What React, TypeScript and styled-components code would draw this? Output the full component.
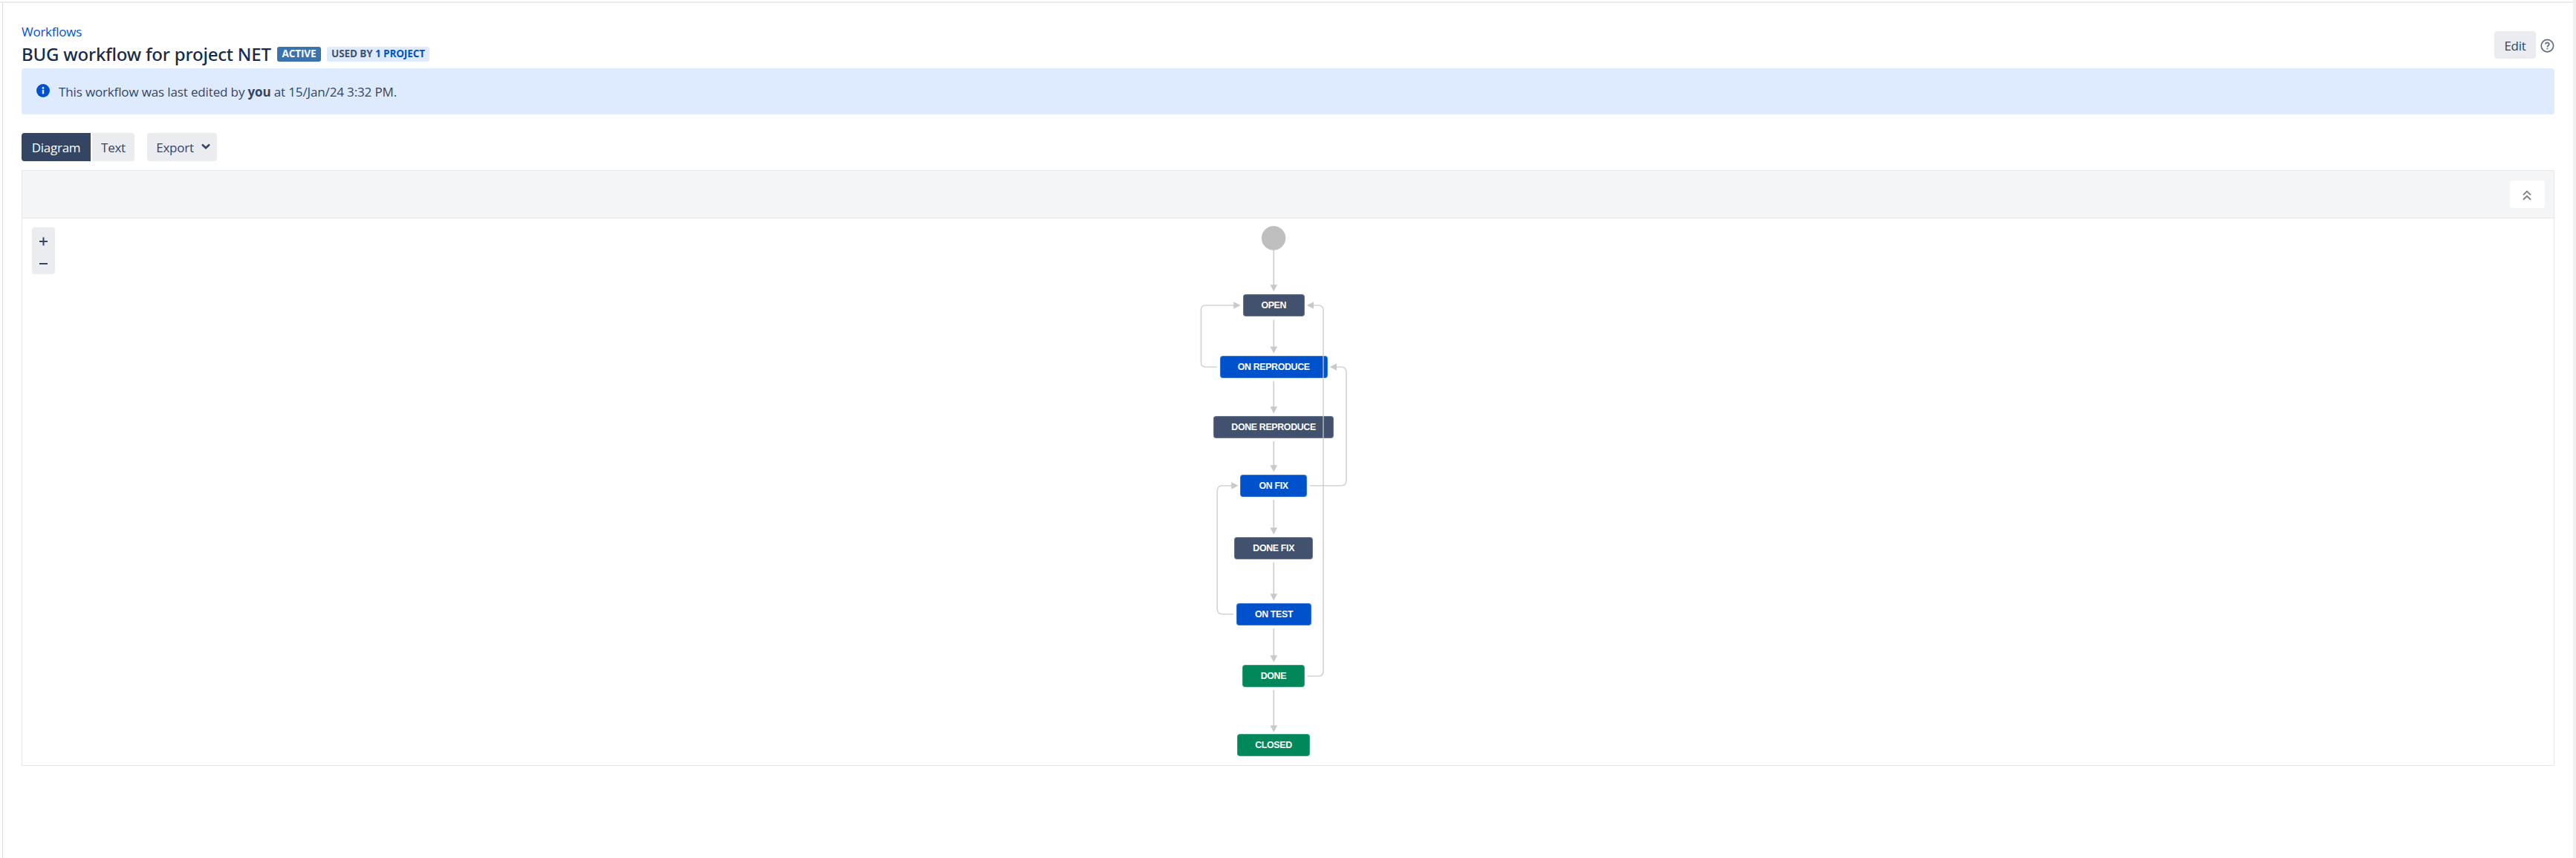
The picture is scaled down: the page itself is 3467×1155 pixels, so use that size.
import React from 'react';
import styled, { createGlobalStyle } from 'styled-components';

const sans = `"Open Sans", "Noto Sans", sans-serif`;

const GlobalStyle = createGlobalStyle`
  * { box-sizing: border-box; }
  body { margin: 0; background: #fff; overflow: hidden; }
`;

const Page = styled.div`
  display: flex;
  flex-direction: column;
  height: 1155px;
  padding-top: 2px;
  font: 400 17px/24px ${sans};
  letter-spacing: -0.14px;
  color: #344563;
`;
const TopRule = styled.div`
  height: 2px;
  width: 3463px;
  background: #ebecf0;
`;
const Body = styled.div`
  flex: 1;
  display: flex;
  margin-top: -2px;
`;
const Main = styled.main`
  flex: 1;
  min-width: 0;
  margin: 2px 0 0 3px;
  border-left: 1px solid #e0e0e0;
  padding: 26px 25px 0;
`;
const ScrollTrack = styled.div`
  width: 4px;
  margin-top: -2px;
  background: #f0f0f0;
`;
const Header = styled.header`
  display: flex;
  justify-content: space-between;
  height: 62px;
`;
const Titles = styled.div`
  display: flex;
  flex-direction: column;
`;
const Crumb = styled.a`
  display: block;
  height: 24px;
  line-height: 26px;
  letter-spacing: -0.25px;
  color: #0052cc;
`;
const TitleRow = styled.div`
  display: flex;
  align-items: center;
  height: 38px;
`;
const Title = styled.h1`
  margin: 0;
  width: 344px;
  white-space: nowrap;
  font: 500 24px/38px "Noto Sans", sans-serif;
  letter-spacing: -0.2px;
  color: #172b4d;
`;
const Badge = styled.span<{ $bg: string; $fg: string; $w: number }>`
  width: ${p => p.$w}px;
  height: 20px;
  margin-right: 8px;
  border-radius: 3px;
  background: ${p => p.$bg};
  color: ${p => p.$fg};
  text-align: center;
  white-space: pre;
  font: 700 13.5px/18px ${sans};
  letter-spacing: -0.1px;
`;
const BadgeLink = styled.a`
  color: #0052cc;
`;
const HeaderActions = styled.div`
  display: flex;
  align-items: center;
  gap: 6px;
  height: 37px;
  margin-top: 12px;
`;
const HelpIcon = styled.svg`
  margin-top: 2px;
`;
const Button = styled.button<{ $w: number; $active?: boolean; $radius?: string }>`
  display: flex;
  align-items: center;
  justify-content: center;
  gap: 9px;
  width: ${p => p.$w}px;
  height: 100%;
  padding: 2px 0 0;
  border: 0;
  border-radius: ${p => p.$radius ?? '4px'};
  background: ${p => (p.$active ? '#344563' : '#ebecf0')};
  color: ${p => (p.$active ? '#fff' : '#344563')};
  font: inherit;
  letter-spacing: -0.25px;
`;
const ExportButton = styled(Button)`
  padding-left: 4px;
`;
const Chevron = styled.svg`
  margin-bottom: 2px;
`;
const Banner = styled.section`
  display: flex;
  align-items: center;
  height: 62px;
  padding-left: 20px;
  border-radius: 4px;
  background: #deebff;
`;
const BannerIcon = styled.svg`
  margin: 0 12px 2px 0;
`;
const BannerText = styled.p`
  margin: 2px 0 0;
  white-space: pre;
`;
const Toolbar = styled.div`
  display: flex;
  height: 38px;
  margin: 25px 0 12px;
`;
const Group = styled.div`
  display: flex;
  gap: 2px;
  margin-right: 17px;
`;
const Frame = styled.section`
  height: 802px;
  border: 1px solid #e6e7e9;
`;
const FrameBar = styled.div`
  display: flex;
  justify-content: flex-end;
  height: 64px;
  padding: 13px 12px 0;
  border-bottom: 1px solid #e6e7e9;
  background: #f4f5f7;
`;
const Collapse = styled.button`
  display: grid;
  place-items: center;
  width: 47px;
  height: 37px;
  padding: 3px 1px 0 0;
  border: 0;
  border-radius: 4px;
  background: #fff;
`;
const Stage = styled.div`
  position: relative;
  height: 736px;
  padding: 12px 13px;
`;
const Zoom = styled.div`
  display: flex;
  width: 31px;
  height: 63px;
  border-radius: 4px;
  background: #ebecf0;
`;
const Edges = styled.svg`
  position: absolute;
  left: 1570px;
  top: 0;
`;
const Node = styled.div<{ $x: number; $y: number; $w: number; $bg: string }>`
  position: absolute;
  left: ${p => p.$x - 30}px;
  top: ${p => p.$y - 294}px;
  width: ${p => p.$w}px;
  height: 30px;
  border: 1px solid rgba(255, 255, 255, 0.22);
  border-radius: 4px;
  background: ${p => p.$bg};
  color: #fff;
  text-align: center;
  white-space: nowrap;
  font: 700 12.4px/28px "Liberation Sans", Arial, sans-serif;
  letter-spacing: -0.35px;
`;

const SLATE = '#42526e';
const BLUE = '#0052cc';
const GREEN = '#00875a';

const nodes: [string, number, number, number, string][] = [
  ['OPEN', 1673, 396, 82.5, SLATE],
  ['ON REPRODUCE', 1641.7, 479, 145, BLUE],
  ['DONE REPRODUCE', 1633.4, 560, 161.4, SLATE],
  ['ON FIX', 1669.4, 639, 89.4, BLUE],
  ['DONE FIX', 1661.4, 723, 105.6, SLATE],
  ['ON TEST', 1664, 811.6, 101, BLUE],
  ['DONE', 1672.2, 895, 83.4, GREEN],
  ['CLOSED', 1665, 988.4, 98, GREEN],
];

const straight: [number, number][] = [
  [336, 392], [430.5, 475.3], [513.3, 556], [594, 635], [673, 719], [757, 808], [846, 891], [929, 985.3],
];

const loops = [
  { d: 'M1638 494H1622.5Q1616.5 494 1616.5 488V417Q1616.5 411 1622.5 411H1661', tip: '1669.5,411 1660.3,406.2 1660.3,415.8' },
  { d: 'M1759.5 910.3H1774Q1781 910.3 1781 903.3V418Q1781 411 1774 411H1767', tip: '1758.8,411 1768,406.2 1768,415.8' },
  { d: 'M1763 653.8H1805Q1812 653.8 1812 646.8V501Q1812 494 1805 494H1798', tip: '1789.8,494 1799,489.2 1799,498.8' },
  { d: 'M1660 826.8H1645.3Q1638.3 826.8 1638.3 819.8V660.8Q1638.3 653.8 1645.3 653.8H1658', tip: '1666.6,653.8 1657.3,649 1657.3,658.6' },
];

export default function App() {
  return (
    <>
      <GlobalStyle />
      <Page>
        <TopRule />
        <Body>
          <Main>
            <Header>
              <Titles>
                <Crumb>Workflows</Crumb>
                <TitleRow>
                  <Title>BUG workflow for project NET</Title>
                  <Badge $bg="#3b73af" $fg="#fff" $w={59}>ACTIVE</Badge>
                  <Badge $bg="#deebff" $fg="#42526e" $w={138}>
                    {'USED BY '}
                    <BadgeLink>1 PROJECT</BadgeLink>
                  </Badge>
                </TitleRow>
              </Titles>
              <HeaderActions>
                <Button $w={56}>Edit</Button>
                <HelpIcon width="19" height="19" viewBox="0 0 19 19" fill="none" stroke="#5e6c84">
                  <circle cx="9.4" cy="9.6" r="8.2" strokeWidth="1.7" />
                  <path d="M7 7.6C7 4.7 11.8 4.7 11.8 7.5C11.8 9.2 9.4 9.3 9.4 11.4" strokeWidth="1.8" />
                  <path d="M9.4 12.8V14.4" strokeWidth="1.9" />
                </HelpIcon>
              </HeaderActions>
            </Header>
            <Banner>
              <BannerIcon width="18" height="18" viewBox="0 0 18 18">
                <circle cx="9" cy="9" r="9" fill="#0052cc" />
                <rect x="7.8" y="7.8" width="2.4" height="5.6" rx="0.6" fill="#deebff" />
                <circle cx="9" cy="5.4" r="1.4" fill="#deebff" />
              </BannerIcon>
              <BannerText>
                This workflow was last edited by <b>you</b> at 15/Jan/24 3:32 PM.
              </BannerText>
            </Banner>
            <Toolbar>
              <Group>
                <Button $w={93} $active $radius="4px 0 0 4px">Diagram</Button>
                <Button $w={57} $radius="0 4px 4px 0">Text</Button>
              </Group>
              <ExportButton $w={94}>
                Export
                <Chevron width="14" height="10" viewBox="0 0 14 10" fill="none" stroke="#344563" strokeWidth="2.6">
                  <path d="M2.8 2.2L7 6.2L11.2 2.2" strokeLinecap="round" />
                </Chevron>
              </ExportButton>
            </Toolbar>
            <Frame>
              <FrameBar>
                <Collapse>
                  <svg width="12" height="14" viewBox="0 0 12 14" fill="none" stroke="#828282" strokeWidth="2">
                    <path d="M1 6.4L6 1.6L11 6.4M1 12.8L6 8L11 12.8" />
                  </svg>
                </Collapse>
              </FrameBar>
              <Stage>
                <Zoom>
                  <svg width="31" height="63" viewBox="0 0 31 63" stroke="#344563" strokeWidth="2">
                    <path d="M10 19H21M15.5 13.5V24.5M10 49H21" />
                  </svg>
                </Zoom>
                {nodes.map(([label, x, y, w, bg]) => (
                  <Node key={label} $x={x} $y={y} $w={w} $bg={bg}>{label}</Node>
                ))}
                <Edges width="240" height="736" viewBox="1600 294 240 736" fill="none">
                  <circle cx="1714.1" cy="320.5" r="16.2" fill="#bfbfbf" />
                  {straight.map(([from, to]) => (
                    <g key={from}>
                      <path d={`M1714.3 ${from}V${to - 8}`} stroke="#ccc" strokeWidth="1.6" />
                      <path d={`M1709.5 ${to - 8.8}H1719.1L1714.3 ${to + 0.4}Z`} fill="#c9c9c9" />
                    </g>
                  ))}
                  {loops.map(l => (
                    <g key={l.tip}>
                      <path d={l.d} stroke="#c8c8c8" strokeOpacity="0.8" strokeWidth="1.6" />
                      <polygon points={l.tip} fill="#c9c9c9" />
                    </g>
                  ))}
                </Edges>
              </Stage>
            </Frame>
          </Main>
          <ScrollTrack />
        </Body>
      </Page>
    </>
  );
}
